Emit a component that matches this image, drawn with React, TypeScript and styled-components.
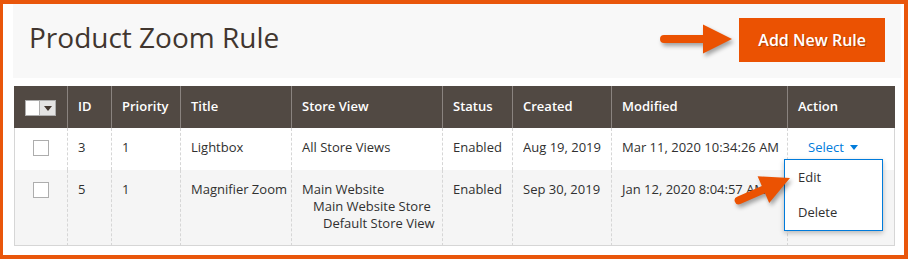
import React from 'react';
import styled, { createGlobalStyle } from 'styled-components';

const GlobalStyle = createGlobalStyle`
  html, body {
    margin: 0;
    padding: 0;
    background: #fff;
  }
  body {
    font-family: 'Open Sans', 'Liberation Sans', sans-serif;
  }
`;

const arrowPath = (shaft: number, head = 29, halfHead = 14.5, halfShaft = 4) =>
  `M${halfShaft} ${-halfShaft} H${shaft} V${-halfHead} L${shaft + head} 0 L${shaft} ${halfHead} V${halfShaft} H${halfShaft} A${halfShaft} ${halfShaft} 0 0 1 ${halfShaft} ${-halfShaft} Z`;

const rows = [
  {
    id: 3,
    priority: 1,
    title: 'Lightbox',
    stores: [{ text: 'All Store Views', indent: 0 }],
    status: 'Enabled',
    created: 'Aug 19, 2019 11:20:15 AM',
    modified: 'Mar 11, 2020 10:34:26 AM',
    open: true,
  },
  {
    id: 5,
    priority: 1,
    title: 'Magnifier Zoom',
    stores: [
      { text: 'Main Website', indent: 0 },
      { text: 'Main Website Store', indent: 11 },
      { text: 'Default Store View', indent: 21 },
    ],
    status: 'Enabled',
    created: 'Sep 30, 2019 9:51:07 AM',
    modified: 'Jan 12, 2020 8:04:57 AM',
    open: false,
  },
];

const columns = [
  { label: '', width: 53 },
  { label: 'ID', width: 44 },
  { label: 'Priority', width: 69 },
  { label: 'Title', width: 111 },
  { label: 'Store View', width: 151 },
  { label: 'Status', width: 70 },
  { label: 'Created', width: 99 },
  { label: 'Modified', width: 176 },
  { label: 'Action', width: 108 },
];

export default function App() {
  return (
    <>
      <GlobalStyle />
      <Frame>
        <PageHeader>
          <Title>Product Zoom Rule</Title>
          <HeaderArrow width="76" height="36" viewBox="0 0 76 36">
            <path d={arrowPath(43)} transform="translate(0 16)" fill="#eb5202" />
          </HeaderArrow>
          <PrimaryButton>Add New Rule</PrimaryButton>
        </PageHeader>

        <GridWrap>
          <Grid>
            <thead>
              <tr>
                {columns.map((c, i) => (
                  <Th key={i} $w={c.width} $first={i === 0}>
                    {i === 0 ? (
                      <MultiCheck>
                        <MultiBox />
                        <MultiToggle>
                          <Caret $color="#41362f" />
                        </MultiToggle>
                      </MultiCheck>
                    ) : (
                      c.label
                    )}
                  </Th>
                ))}
              </tr>
            </thead>
            <tbody>
              {rows.map((r, i) => (
                <Row key={r.id} $striped={i % 2 === 1} $height={i === 0 ? 42 : undefined}>
                  <CheckCell>
                    <Checkbox />
                  </CheckCell>
                  <Td>{r.id}</Td>
                  <Td>{r.priority}</Td>
                  <Td>{r.title}</Td>
                  <Td>
                    {r.stores.map((s) => (
                      <StoreLine key={s.text} $indent={s.indent}>
                        {s.text}
                      </StoreLine>
                    ))}
                  </Td>
                  <Td>{r.status}</Td>
                  <Td $padRight={8}>
                    <Clip>{r.created}</Clip>
                  </Td>
                  <Td $padRight={2}>{r.modified}</Td>
                  <ActionCell>
                    <ActionSelect>
                      Select
                      <Caret $color="#007bdb" />
                      {r.open && (
                        <Menu>
                          <MenuItem>Edit</MenuItem>
                          <MenuItem>Delete</MenuItem>
                        </Menu>
                      )}
                    </ActionSelect>
                  </ActionCell>
                </Row>
              ))}
            </tbody>
          </Grid>
        </GridWrap>

        <PointerArrow width="76" height="52" viewBox="0 0 76 52">
          <path d={arrowPath(31)} transform="translate(11 42) rotate(-23.6)" fill="#eb5202" />
        </PointerArrow>
      </Frame>
    </>
  );
}

const Frame = styled.div`
  position: relative;
  box-sizing: border-box;
  width: 908px;
  height: 259px;
  border: solid #e9560b;
  border-width: 4px 4px 4px 3px;
  padding: 0 3px 0 10px;
  background: #fff;
  overflow: hidden;
`;

const PageHeader = styled.div`
  display: flex;
  align-items: center;
  height: 74px;
  padding: 0 16px;
  background: #f8f8f8;
`;

const Title = styled.h1`
  margin: 0 auto 8px 0;
  font-size: 28px;
  font-weight: 400;
  line-height: 38px;
  color: #41362f;
`;

const HeaderArrow = styled.svg`
  margin: 0 3px 0 0;
  overflow: visible;
  filter: drop-shadow(2px 3px 2px rgba(0, 0, 0, 0.35));
`;

const PrimaryButton = styled.button`
  height: 44px;
  margin-bottom: 2px;
  padding: 0 19px;
  border: 0;
  background: #eb5202;
  color: #fff;
  font-family: inherit;
  font-size: 16px;
  font-weight: 600;
  text-shadow: 1px 1px 0 rgba(0, 0, 0, 0.25);
`;

const GridWrap = styled.div`
  margin: 8px 0 0 1px;
  width: 881px;
`;

const Grid = styled.table`
  width: 881px;
  table-layout: fixed;
  border-collapse: separate;
  border-spacing: 0;
  font-size: 13px;
  color: #303030;
`;

const Th = styled.th<{ $w: number; $first?: boolean }>`
  box-sizing: border-box;
  width: ${(p) => p.$w}px;
  height: 42px;
  padding: ${(p) => (p.$first ? '0' : '0 8px 2px 10px')};
  border-left: ${(p) => (p.$first ? '0' : '1px solid #8a837f')};
  background: #514943;
  color: #fff;
  font-weight: 600;
  text-align: ${(p) => (p.$first ? 'center' : 'left')};
  vertical-align: middle;
  white-space: nowrap;
`;

const MultiCheck = styled.span`
  display: inline-flex;
  vertical-align: middle;
`;

const MultiBox = styled.span`
  box-sizing: border-box;
  width: 15px;
  height: 16px;
  background: #fff;
  border: 1px solid #adadad;
`;

const MultiToggle = styled.span`
  box-sizing: border-box;
  display: flex;
  align-items: center;
  justify-content: center;
  width: 16px;
  height: 16px;
  background: #e3e3e3;
  border: 1px solid #adadad;
  border-left: 0;
`;

const Caret = styled.span<{ $color: string }>`
  display: inline-block;
  width: 0;
  height: 0;
  border-left: 4px solid transparent;
  border-right: 4px solid transparent;
  border-top: 5px solid ${(p) => p.$color};
`;

const Row = styled.tr<{ $striped?: boolean; $height?: number }>`
  height: ${(p) => (p.$height ? `${p.$height}px` : 'auto')};
  background: ${(p) => (p.$striped ? '#f5f5f5' : '#fff')};

  &:last-child td {
    border-bottom: 1px solid #d6d6d6;
  }
`;

const Td = styled.td<{ $padRight?: number }>`
  padding: 11px ${(p) => p.$padRight ?? 10}px 13px 10px;
  border-left: 1px dashed #d6d6d6;
  line-height: 17px;
  vertical-align: top;
  white-space: nowrap;
  overflow: hidden;
`;

const CheckCell = styled.td`
  padding: 11px 0 13px;
  border-left: 1px solid #d6d6d6;
  line-height: 17px;
  text-align: center;
  vertical-align: top;
`;

const Checkbox = styled.span`
  box-sizing: border-box;
  display: inline-block;
  width: 16px;
  height: 16px;
  margin-top: 1px;
  vertical-align: top;
  background: #fff;
  border: 1px solid #adadad;
`;

const StoreLine = styled.div<{ $indent: number }>`
  padding-left: ${(p) => p.$indent}px;
`;

const Clip = styled.div`
  overflow: hidden;
  white-space: nowrap;
`;

const ActionCell = styled.td`
  padding: 11px 10px 13px 20px;
  border-left: 1px dashed #d6d6d6;
  border-right: 1px solid #d6d6d6;
  line-height: 17px;
  vertical-align: top;
  overflow: visible;
`;

const ActionSelect = styled.span`
  position: relative;
  display: inline-flex;
  align-items: center;
  gap: 6px;
  color: #007bdb;
`;

const Menu = styled.div`
  position: absolute;
  left: -24px;
  top: 20px;
  z-index: 2;
  box-sizing: border-box;
  width: 99px;
  background: #fff;
  border: 1px solid #007bdb;
  box-shadow: 0 2px 5px rgba(0, 0, 0, 0.25);
`;

const MenuItem = styled.div`
  height: 35px;
  padding: 0 13px;
  line-height: 35px;
  color: #303030;
`;

const PointerArrow = styled.svg`
  position: absolute;
  left: 721px;
  top: 156px;
  z-index: 3;
  overflow: visible;
  filter: drop-shadow(2px 3px 2px rgba(0, 0, 0, 0.35));
`;
